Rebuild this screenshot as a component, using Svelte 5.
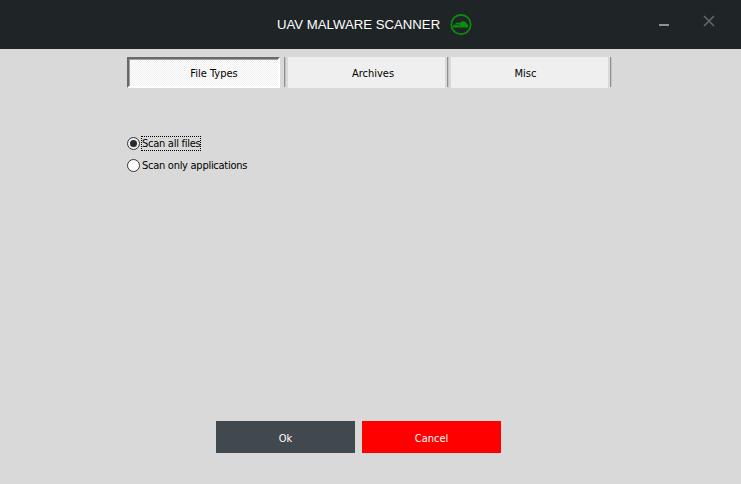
<script>
  const tabs = ["File Types", "Archives", "Misc"];
  let active = $state(0);
  let scan = $state("all");
</script>

<div class="window">
  <header class="titlebar">
    <div class="title">
      <span>UAV MALWARE SCANNER</span>
      <svg class="logo" width="22" height="22" viewBox="0 0 22 22">
        <circle cx="11" cy="10.5" r="9.7" fill="none" stroke="#0a8f0a" stroke-width="1.7" />
        <path d="M3.2 13.5a2 2 0 0 1 1.8-2.9 3 3 0 0 1 4.7-1.5 4 4 0 0 1 7.3 1 2.3 2.3 0 0 1 .7 3.4z" fill="#0a8f0a" />
        <path d="M5.2 10.6c1.6-.3 3.4 0 4.6 1" fill="none" stroke="#1f2427" stroke-width=".7" />
      </svg>
    </div>
    <div class="controls">
      <span class="minimize"></span>
      <svg class="close" width="12" height="12" viewBox="0 0 12 12">
        <path d="M1 1l10 10M11 1L1 11" stroke="#5f6870" stroke-width="1.6" fill="none" />
      </svg>
    </div>
  </header>

  <nav class="tabs">
    {#each tabs as tab, i}
      <button class="tab" class:active={active === i} onclick={() => (active = i)}>{tab}</button>
      <span class="sep"></span>
    {/each}
  </nav>

  <main class="panel">
    <label class="radio" class:focused={scan === "all"}>
      <input type="radio" bind:group={scan} value="all" />
      <span class="dot"></span>
      <span class="text">Scan all files</span>
    </label>
    <label class="radio">
      <input type="radio" bind:group={scan} value="apps" />
      <span class="dot"></span>
      <span class="text">Scan only applications</span>
    </label>
  </main>

  <footer class="actions">
    <button class="btn ok">Ok</button>
    <button class="btn cancel">Cancel</button>
  </footer>
</div>

<style>
  :global(body) {
    margin: 0;
    background: #d9d9d9;
  }

  .window {
    width: 741px;
    height: 484px;
    display: flex;
    flex-direction: column;
    background: #d9d9d9;
    font-family: "DejaVu Sans", sans-serif;
    font-stretch: condensed;
    font-size: 11px;
    color: #000;
    overflow: hidden;
  }

  .titlebar {
    height: 49px;
    flex: none;
    display: flex;
    align-items: center;
    justify-content: space-between;
    background: #1f2427;
    padding: 0 26px 0 277px;
    box-sizing: border-box;
  }

  .title {
    display: flex;
    align-items: center;
    gap: 10px;
    color: #fff;
    font-family: "Liberation Sans", sans-serif;
    font-stretch: normal;
    font-size: 13.2px;
  }

  .controls {
    display: flex;
    align-items: center;
    gap: 34px;
    margin-top: -7px;
  }

  .minimize {
    display: block;
    width: 10px;
    height: 2px;
    margin: 10px 0 2px;
    background: #8a929c;
  }

  .tabs {
    display: flex;
    height: 31px;
    margin: 8px 0 0 127px;
  }

  .tab {
    width: 157px;
    box-sizing: border-box;
    padding: 2px 0 0;
    border: 0;
    background: #efefef;
    font: inherit;
    color: #000;
  }

  .tab:nth-of-type(1) {
    padding-left: 21px;
  }

  .tab:nth-of-type(2) {
    padding-left: 13px;
  }

  .tab:nth-of-type(3) {
    padding-right: 8px;
  }

  .tab.active {
    width: 153px;
    margin-right: 2px;
    border: 2px solid #fff;
    border-top-color: #696969;
    border-left-color: #696969;
    background: repeating-conic-gradient(#fff 0 25%, #efefef 0 50%) 0 0 / 2px 2px;
    box-shadow: inset 1px 1px 0 #a0a0a0;
  }

  .sep {
    flex: none;
    width: 1px;
    height: 30px;
    margin: 0 2px;
    background: #8f8f8f;
    border-right: 1px solid #c4c4c4;
  }

  .panel {
    flex: 1;
    padding: 48px 0 0 127px;
    display: flex;
    flex-direction: column;
    align-items: flex-start;
    gap: 7px;
  }

  .radio {
    display: flex;
    align-items: center;
    height: 15px;
  }

  .radio input {
    position: absolute;
    opacity: 0;
  }

  .dot {
    width: 13px;
    height: 13px;
    box-sizing: border-box;
    border: 1px solid #333;
    border-radius: 50%;
    background: #fff;
    margin-right: 2px;
    display: grid;
    place-items: center;
  }

  .radio input:checked + .dot {
    background: #ececec;
  }

  .radio input:checked + .dot::after {
    content: "";
    width: 7px;
    height: 7px;
    border-radius: 50%;
    background: #2b2b2b;
  }

  .text {
    letter-spacing: -0.27px;
  }

  .focused .text {
    outline: 1px dotted #000;
  }

  .actions {
    display: flex;
    justify-content: flex-start;
    gap: 7px;
    padding: 0 0 31px 216px;
  }

  .btn {
    width: 139px;
    height: 32px;
    border: 0;
    padding: 2px 0 0;
    font: inherit;
    color: #fff;
  }

  .ok {
    background: #41484e;
  }

  .cancel {
    background: #ff0000;
  }
</style>
